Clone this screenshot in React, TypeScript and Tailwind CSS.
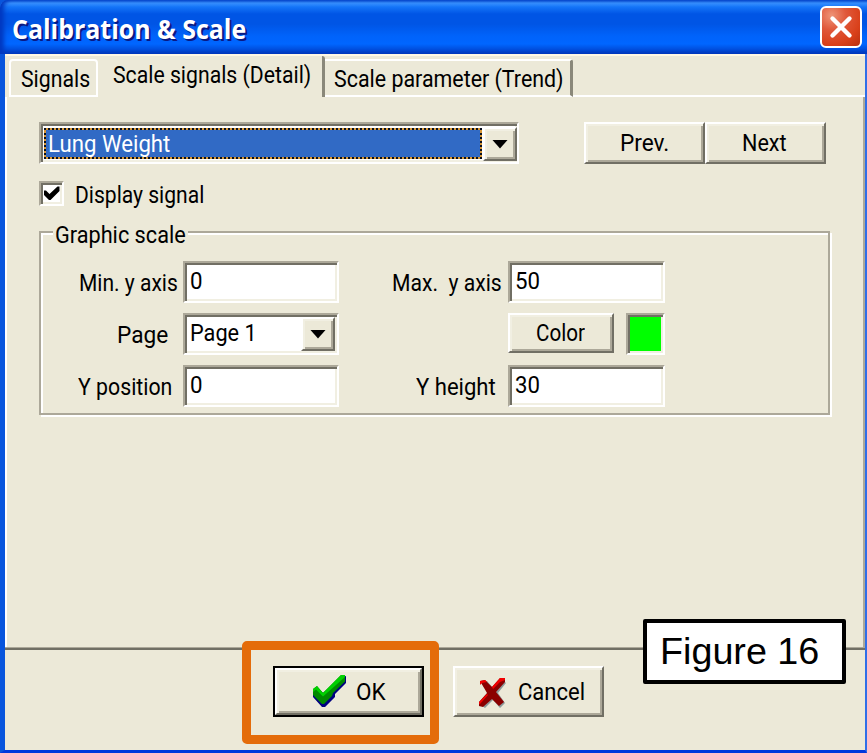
import { useLayoutEffect, useRef, useState, type ReactNode } from "react";

const sunken =
  "border-2 border-t-[#aca899] border-l-[#aca899] border-b-white border-r-white shadow-[inset_2px_2px_0_#716f64,inset_-2px_-2px_0_#f1efe2]";
const raised =
  "border-2 border-t-white border-l-white border-b-[#716f64] border-r-[#716f64] shadow-[inset_2px_2px_0_#f1efe2,inset_-2px_-2px_0_#aca899] bg-[#ece9d8]";

/* One line of text, squeezed horizontally to the width w. */
function Fit({ w, className = "", children }: { w: number; className?: string; children: string }) {
  const ref = useRef<HTMLSpanElement>(null);
  const [scale, setScale] = useState(1);
  useLayoutEffect(() => {
    if (ref.current) setScale(w / ref.current.offsetWidth);
  }, [w]);
  return (
    <span className={`block h-7 shrink-0 leading-7 ${className}`} style={{ width: w }}>
      <span ref={ref} className="inline-block origin-left whitespace-pre" style={{ transform: `scaleX(${scale})` }}>
        {children}
      </span>
    </span>
  );
}

function Arrow() {
  return (
    <svg width="16" height="10" viewBox="0 0 16 10" className="shrink-0">
      <path d="M0.5 1H15.5L8 9.5Z" fill="#000" />
    </svg>
  );
}

function DropButton({ className = "" }: { className?: string }) {
  return (
    <div className={`${raised} flex w-[34px] shrink-0 items-center justify-center ${className}`}>
      <Arrow />
    </div>
  );
}

function Field({ value, w, className }: { value: string; w: number; className: string }) {
  return (
    <div className={`${sunken} h-[42px] shrink-0 bg-white pl-[5px] pt-[4px] ${className}`}>
      <Fit w={w}>{value}</Fit>
    </div>
  );
}

function Label({ w, className, children }: { w: number; className: string; children: string }) {
  return (
    <div className={`flex shrink-0 justify-end pt-[8px] ${className}`}>
      <Fit w={w}>{children}</Fit>
    </div>
  );
}

function Row({ children }: { children: ReactNode }) {
  return <div className="flex h-[42px]">{children}</div>;
}

function TitleBar() {
  return (
    <header className="flex h-[54px] shrink-0 items-start justify-between rounded-tl-[8px] bg-[linear-gradient(180deg,#0a50d4_0,#3a93ff_3px,#1474f8_7px,#0055e5_14px,#0055e5_24px,#0063fb_36px,#0066ff_44px,#0050e0_49px,#0038b8_54px)] pl-[12px] pr-[5px] shadow-[inset_4px_0_4px_#0038c0]">
      <Fit
        w={234}
        className="mt-[15px] font-['Open_Sans',sans-serif] text-[26px] font-bold text-white [text-shadow:2px_2px_0_#0a1883]"
      >
        Calibration & Scale
      </Fit>
      <div className="mt-[6px] flex h-[42px] w-[42px] items-center justify-center rounded-[6px] border-[2.5px] border-white bg-[radial-gradient(circle_at_25%_20%,#ee9478_0,#e0583a_35%,#d9401a_70%,#b83010_100%)]">
        <svg width="24" height="24" viewBox="0 0 24 24">
          <path d="M3.5 3.5L20.5 20.5M20.5 3.5L3.5 20.5" stroke="#fff" strokeWidth="4.4" strokeLinecap="round" />
        </svg>
      </div>
    </header>
  );
}

function Tabs() {
  return (
    <div className="flex h-[43px] shrink-0 items-end border-t-2 border-[#fff8e4]">
      <div className="ml-[4px] h-[38px] w-[89px] rounded-t-[4px] border-2 border-white pl-[10px] pt-[4px]">
        <Fit w={69}>Signals</Fit>
      </div>
      <div className="h-[41px] w-[227px] rounded-tr-[3px] border-r-[3px] border-r-[#8a887a] pl-[15px] pt-[5px]">
        <Fit w={198}>Scale signals (Detail)</Fit>
      </div>
      <div className="h-[38px] w-[248px] rounded-tr-[3px] border-y-2 border-r-[3px] border-y-white border-r-[#8a887a] pl-[9px] pt-[4px]">
        <Fit w={230}>Scale parameter (Trend)</Fit>
      </div>
      <div className="h-[2px] flex-1 bg-white" />
    </div>
  );
}

function SignalRow() {
  return (
    <div className="flex h-[42px]">
      <div className={`${sunken} flex w-[480px] bg-white pb-[2px] pl-[3px] pr-0 pt-[3px]`}>
        <div className="mt-px h-[31px] w-[438px] border-2 border-[#d89838] bg-[#316ac5] pl-[2px] text-white outline-2 -outline-offset-2 outline-dotted outline-[#081020]">
          <Fit w={122}>Lung Weight</Fit>
        </div>
        <DropButton className="ml-px h-[34px]" />
      </div>
      <div className={`${raised} ml-[65px] flex w-[121px] justify-center pt-[5px]`}>
        <Fit w={49}>Prev.</Fit>
      </div>
      <div className={`${raised} flex w-[121px] justify-center pr-[2px] pt-[5px]`}>
        <Fit w={45}>Next</Fit>
      </div>
    </div>
  );
}

function GraphicScale() {
  return (
    <section className="mt-[25px] flex h-[184px] w-[791px] flex-col border-2 border-[#aca899] shadow-[inset_2px_2px_0_#fff,2px_2px_0_#fff]">
      <div className="-mt-[12px] ml-[12px] h-7 w-[135px] bg-[#ece9d8] pl-[2px]">
        <Fit w={131}>Graphic scale</Fit>
      </div>
      <div className="mt-[12px] flex flex-col gap-[10px]">
        <Row>
          <Label w={99} className="w-[137px]">Min. y axis</Label>
          <Field value="0" w={13} className="ml-[5px] w-[156px]" />
          <Label w={110} className="w-[163px]">Max.  y axis</Label>
          <Field value="50" w={25} className="ml-[6px] w-[157px]" />
        </Row>
        <Row>
          <Label w={51} className="w-[127px]">Page</Label>
          <div className={`${sunken} ml-[15px] flex w-[156px] shrink-0 bg-white pl-[5px]`}>
            <Fit w={67} className="pt-[4px]">Page 1</Fit>
            <DropButton className="ml-auto mr-[2px] mt-[2px] h-[34px]" />
          </div>
          <div className={`${raised} ml-[169px] flex h-[40px] w-[106px] justify-center pr-[1px] pt-[4px]`}>
            <Fit w={49}>Color</Fit>
          </div>
          <div className={`${sunken} ml-[12px] w-[39px] bg-[#00ff00]`} />
        </Row>
        <Row>
          <Label w={94} className="w-[131px]">Y position</Label>
          <Field value="0" w={13} className="ml-[11px] w-[156px]" />
          <Label w={80} className="w-[157px]">Y height</Label>
          <Field value="30" w={25} className="ml-[12px] w-[157px]" />
        </Row>
      </div>
    </section>
  );
}

function Actions() {
  return (
    <footer className="flex pl-[268px] pt-[16px]">
      <div className="flex h-[51px] w-[151px] border-2 border-black">
        <div className={`${raised} flex flex-1 pl-[35px]`}>
          <svg width="36" height="34" viewBox="0 0 36 34" className="mt-[5px]">
            <path d="M1 15L5 12L11 18L30 2L34 1V8L23 19V22L13 32H10L1 22Z" fill="#000080" />
            <path d="M1 14L5 11L11 18L29 0H33V6.500L21 18L20 21L12 29H10L1 20Z" fill="#008a00" />
            <path d="M1 17V14L5 11L11 18L29 0H33V2L11 21.500L4 14.500Z" fill="#00d000" />
          </svg>
          <Fit w={30} className="ml-[8px] mt-[8px]">OK</Fit>
        </div>
      </div>
      <div className={`${raised} ml-[29px] flex h-[51px] w-[151px] pl-[23px]`}>
        <svg width="30" height="32" viewBox="0 0 30 32" className="mt-[10px]">
          <path d="M4 6L9 3L15 10L25 2L28 5L20 15L27 25L22 30L15 22L7 30L3 27L11 15Z" fill="#8c9a9a" />
          <path d="M2 3L7 2L14 9L22 0H27V4L18 14L26 24L21 28L14 21L5 29L1 28V24L9 15Z" fill="#8b0000" />
          <path d="M2 7V3L7 2L9 4L4 5ZM14 9L22 0H27V2L22 4L15 11ZM1 26V24L9 16L10 17L2 26Z" fill="#f00000" />
        </svg>
        <Fit w={67} className="ml-[10px] mt-[10px]">Cancel</Fit>
      </div>
    </footer>
  );
}

export default function App() {
  return (
    <div className="relative flex h-[753px] w-[867px] flex-col overflow-hidden bg-[#0855dd] font-['Roboto',sans-serif] text-[24px] text-black">
      <TitleBar />
      <div className="flex flex-1 flex-col border-b-[3px] border-l-[5px] border-r-2 border-b-[#0038dc] border-l-[#0855dd] border-r-[#2f6ee8] bg-[#ece9d8]">
        <Tabs />
        <main className="flex h-[550px] shrink-0 flex-col border-l-2 border-r-2 border-l-white border-r-[#aca899] pl-[32px] pt-[25px]">
          <SignalRow />
          <div className="mt-[17px] flex h-[25px]">
            <div className={`${sunken} flex w-[25px] items-center justify-center bg-white`}>
              <svg width="19" height="19" viewBox="0 0 19 19" className="shrink-0">
                <path d="M2 6.500H4L7.500 10L15.500 2.500H17.500V7L8.500 16H7L2 11Z" fill="#000" />
              </svg>
            </div>
            <Fit w={129} className="ml-[11px]">Display signal</Fit>
          </div>
          <GraphicScale />
        </main>
        <div className="h-[3px] shrink-0 border-t border-[#aca899] bg-[#716f64]" />
        <Actions />
      </div>
      <div className="absolute left-[242px] top-[641px] h-[103px] w-[197px] rounded-[5px] border-[9px] border-[#e46c0a]" />
      <div className="absolute left-[643px] top-[619px] h-[65px] w-[203px] rounded-[2px] border-4 border-black bg-white pl-[13px] pt-[15px] font-['Liberation_Sans',Arial,sans-serif] text-[37px]">
        <Fit w={159}>Figure 16</Fit>
      </div>
    </div>
  );
}
